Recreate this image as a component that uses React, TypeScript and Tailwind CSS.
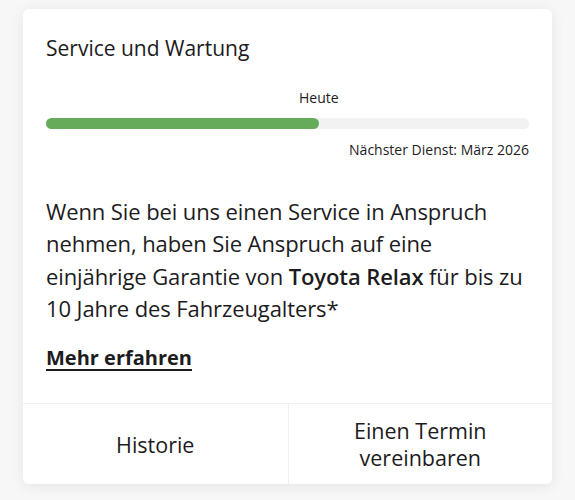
export default function App() {
  return (
    <div className="min-h-[500px] bg-[#f7f7f7] pt-[9px] font-['Open_Sans',sans-serif] text-[#1c1c1e]">
      <div className="mx-[23px] overflow-hidden rounded-[6px] bg-white shadow-[0_2px_14px_rgba(0,0,0,0.08)]">
        <div className="px-[23px] pt-[25px]">
          <h2 className="text-[21px] leading-[28px]">Service und Wartung</h2>

          <div className="mt-[28px] flex flex-col">
            <p className="pl-[253px] text-[14px] leading-[16px]">Heute</p>
            <div className="mt-[12px] h-[11px] w-full rounded-full bg-[#f2f2f2]">
              <div className="h-full rounded-full bg-[#66ab5a]" style={{ width: "56.5%" }} />
            </div>
            <p className="mt-[13px] text-right text-[14px] leading-[16px]">Nächster Dienst: März 2026</p>
          </div>

          <p className="mt-[37px] text-[22px] leading-[32.3px] tracking-[-0.1px]">
            Wenn Sie bei uns einen Service in Anspruch nehmen, haben Sie Anspruch auf eine einjährige Garantie von{" "}
            <span className="font-semibold">Toyota Relax</span> für bis zu
            <br />
            10 Jahre des Fahrzeugalters*
          </p>

          <a className="mt-[20px] inline-block text-[20px] font-bold leading-[28px] underline underline-offset-[4px]">
            Mehr erfahren
          </a>
        </div>

        <div className="mt-[31px] grid h-[81px] grid-cols-2 border-t border-[#f0f0f0]">
          <button className="flex items-center justify-center text-[21.5px] leading-[27px]">Historie</button>
          <button className="flex items-center justify-center border-l border-[#f0f0f0] text-center text-[21.5px] leading-[27px]">
            Einen Termin
            <br />
            vereinbaren
          </button>
        </div>
      </div>
    </div>
  );
}
